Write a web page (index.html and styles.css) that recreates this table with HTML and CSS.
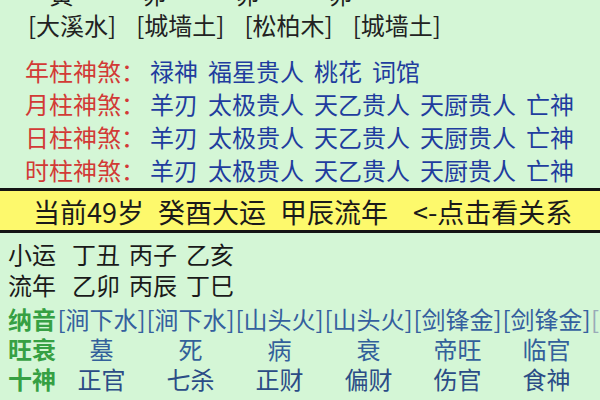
FILE: index.html
```html
<!DOCTYPE html>
<html lang="zh-CN">
<head>
<meta charset="utf-8">
<link rel="stylesheet" href="styles.css">
</head>
<body>
<div class="page">
  <div class="zhi-row">
    <span>寅</span><span>卯</span><span>卯</span><span>卯</span>
  </div>
  <div class="nayin-top">
    <span>[大溪水]</span><span>[城墙土]</span><span>[松柏木]</span><span>[城墙土]</span>
  </div>
  <div class="shensha">
    <div class="ss-row"><span class="ss-label">年柱神煞：</span><span class="ss-items"><span>禄神</span><span>福星贵人</span><span>桃花</span><span>词馆</span></span></div>
    <div class="ss-row"><span class="ss-label">月柱神煞：</span><span class="ss-items"><span>羊刃</span><span>太极贵人</span><span>天乙贵人</span><span>天厨贵人</span><span>亡神</span></span></div>
    <div class="ss-row"><span class="ss-label">日柱神煞：</span><span class="ss-items"><span>羊刃</span><span>太极贵人</span><span>天乙贵人</span><span>天厨贵人</span><span>亡神</span></span></div>
    <div class="ss-row"><span class="ss-label">时柱神煞：</span><span class="ss-items"><span>羊刃</span><span>太极贵人</span><span>天乙贵人</span><span>天厨贵人</span><span>亡神</span></span></div>
  </div>
  <div class="bar">
    <span>当前49岁</span><span>癸酉大运</span><span>甲辰流年</span><span class="bar-link">&lt;-点击看关系</span>
  </div>
  <div class="yun">
    <div class="yun-row"><span class="yun-label">小运</span><span>丁丑</span><span>丙子</span><span>乙亥</span></div>
    <div class="yun-row"><span class="yun-label">流年</span><span>乙卯</span><span>丙辰</span><span>丁巳</span></div>
  </div>
  <div class="table">
    <div class="t-row nayin">
      <span class="t-label">纳音</span>
      <span>[涧下水]</span><span>[涧下水]</span><span>[山头火]</span><span>[山头火]</span><span>[剑锋金]</span><span>[剑锋金]</span><span class="t-more">[</span>
    </div>
    <div class="t-row wang">
      <span class="t-label">旺衰</span>
      <span>墓</span><span>死</span><span>病</span><span>衰</span><span>帝旺</span><span>临官</span>
    </div>
    <div class="t-row shishen">
      <span class="t-label">十神</span>
      <span>正官</span><span>七杀</span><span>正财</span><span>偏财</span><span>伤官</span><span>食神</span>
    </div>
  </div>
</div>
</body>
</html>
```
FILE: styles.css
```css
html, body {
  margin: 0;
  padding: 0;
}
body {
  background: #d4f6d6;
  font-family: "Noto Sans CJK SC", "Noto Sans", sans-serif;
  color: #1c1c1c;
  width: 600px;
  height: 400px;
  overflow: hidden;
}
.page {
  display: flex;
  flex-direction: column;
}
.zhi-row {
  height: 8px;
  overflow: hidden;
  display: grid;
  grid-template-columns: repeat(4, 93px);
  padding-left: 15px;
  align-items: start;
  font-size: 24px;
  line-height: 24px;
}
.zhi-row span {
  text-align: center;
  margin-top: -18px;
}
.nayin-top {
  display: flex;
  gap: 20px;
  padding-left: 28px;
  font-size: 24px;
  line-height: 34px;
  height: 34px;
  color: #222;
}
.shensha {
  padding-top: 12px;
  padding-bottom: 2px;
}
.ss-row {
  display: flex;
  padding-left: 25px;
  font-size: 24px;
  line-height: 33px;
  height: 33px;
  white-space: nowrap;
}
.ss-label {
  color: #d23a36;
  width: 125px;
}
.ss-items {
  display: flex;
  gap: 10px;
  color: #1f3d9e;
}
.bar {
  border-top: 3px solid #141414;
  border-bottom: 3px solid #141414;
  background: #fdf96c;
  height: 37px;
  display: flex;
  align-items: center;
  padding-left: 33px;
  padding-top: 2px;
  box-sizing: content-box;
  font-size: 27px;
  line-height: 35px;
  color: #1a1a1a;
  white-space: nowrap;
}
.bar span {
  margin-right: 14px;
}
.bar .bar-link {
  margin-left: 11px;
}
.yun {
  padding-top: 5px;
}
.yun-row {
  display: flex;
  gap: 9px;
  padding-left: 8px;
  font-size: 24px;
  line-height: 31px;
  height: 31px;
  color: #1a1a1a;
}
.yun-label {
  margin-right: 7px;
}
.table {
  padding-top: 4px;
}
.t-row {
  display: grid;
  grid-template-columns: 49px repeat(6, 89px) 20px;
  padding-left: 8px;
  font-size: 24px;
  line-height: 30px;
  height: 30px;
  white-space: nowrap;
}
.t-row span {
  text-align: center;
}
.t-row .t-label {
  text-align: left;
  color: #36a043;
  font-weight: bold;
}
.t-row .t-more {
  text-align: left;
  color: #9aaab8;
}
.nayin {
  color: #35609e;
}
.wang {
  color: #33609a;
}
.shishen {
  color: #2b4c86;
}
```
